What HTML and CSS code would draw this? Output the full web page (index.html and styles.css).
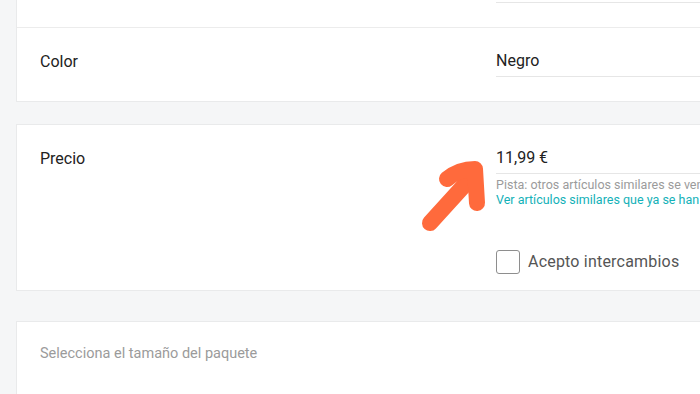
FILE: index.html
```html
<!DOCTYPE html>
<html lang="es">
<head>
<meta charset="utf-8">
<title>Precio</title>
<link rel="stylesheet" href="styles.css">
</head>
<body>
<div class="page">
  <section class="card card-first">
    <div class="stub">
      <div class="stub-line"></div>
    </div>
    <div class="row">
      <div class="label">Color</div>
      <div class="value">
        <div class="input">Negro</div>
      </div>
    </div>
  </section>

  <section class="card card-price">
    <div class="row row-price">
      <div class="label">Precio</div>
      <div class="value">
        <div class="input">11,99 €</div>
        <p class="hint">Pista: otros artículos similares se venden por entre 8 € y 15 €</p>
        <a class="link" href="#">Ver artículos similares que ya se han vendido</a>
        <label class="check">
          <span class="box"></span>
          <span class="check-text">Acepto intercambios</span>
        </label>
      </div>
    </div>
  </section>

  <section class="card card-package">
    <div class="package-title">Selecciona el tamaño del paquete</div>
  </section>
</div>

<svg class="arrow" width="700" height="394" viewBox="0 0 700 394" aria-hidden="true">
  <g fill="none" stroke="#ff6a3c" stroke-width="16" stroke-linecap="round" stroke-linejoin="round">
    <path d="M430 223 L470 179"/>
    <path d="M447 179 Q459 169 475 169 L477 203"/>
  </g>
</svg>
</body>
</html>
```

FILE: styles.css
```css
html, body {
  margin: 0;
  padding: 0;
}

body {
  background: #f5f6f7;
  font-family: Roboto, "Liberation Sans", Arial, sans-serif;
  color: #222;
  width: 700px;
  height: 394px;
  overflow: hidden;
  position: relative;
}

.page {
  padding-left: 16px;
  width: 900px;
}

.card {
  background: #fff;
  border: 1px solid #e9eaeb;
}

.card-first {
  border-top: none;
}

.stub {
  height: 27px;
  border-bottom: 1px solid #ececec;
}

.stub-line {
  margin-left: 479px;
  height: 2px;
  border-bottom: 1px solid #e6e6e6;
}

.row {
  display: grid;
  grid-template-columns: 456px 1fr;
  padding: 23px 0 24px 23px;
}

.row-price {
  padding-bottom: 16px;
}

.label {
  font-size: 16px;
  line-height: 20px;
  padding-top: 1px;
  color: #222;
}

.value {
  display: flex;
  flex-direction: column;
}

.input {
  font-size: 16px;
  line-height: 20px;
  padding-bottom: 5px;
  border-bottom: 1px solid #e6e6e6;
  color: #222;
}

.hint {
  margin: 3px 0 0;
  font-size: 12.5px;
  line-height: 15px;
  color: #9b9b9b;
  white-space: nowrap;
}

.link {
  font-size: 12.5px;
  line-height: 15px;
  color: #13b1b8;
  text-decoration: none;
  white-space: nowrap;
}

.check {
  margin-top: 43px;
  display: flex;
  align-items: center;
  gap: 8px;
}

.box {
  width: 22px;
  height: 22px;
  border: 1px solid #8e8e8e;
  border-radius: 3px;
  background: #fff;
}

.check-text {
  font-size: 16px;
  letter-spacing: 0.2px;
  line-height: 22px;
  color: #555;
}

.card-first + .card-price {
  margin-top: 22px;
}

.card-package {
  margin-top: 30px;
  height: 100px;
  padding: 22px 0 0 23px;
}

.package-title {
  font-size: 14.5px;
  line-height: 20px;
  color: #9b9b9b;
}

.arrow {
  position: absolute;
  left: 0;
  top: 0;
  pointer-events: none;
}
```
